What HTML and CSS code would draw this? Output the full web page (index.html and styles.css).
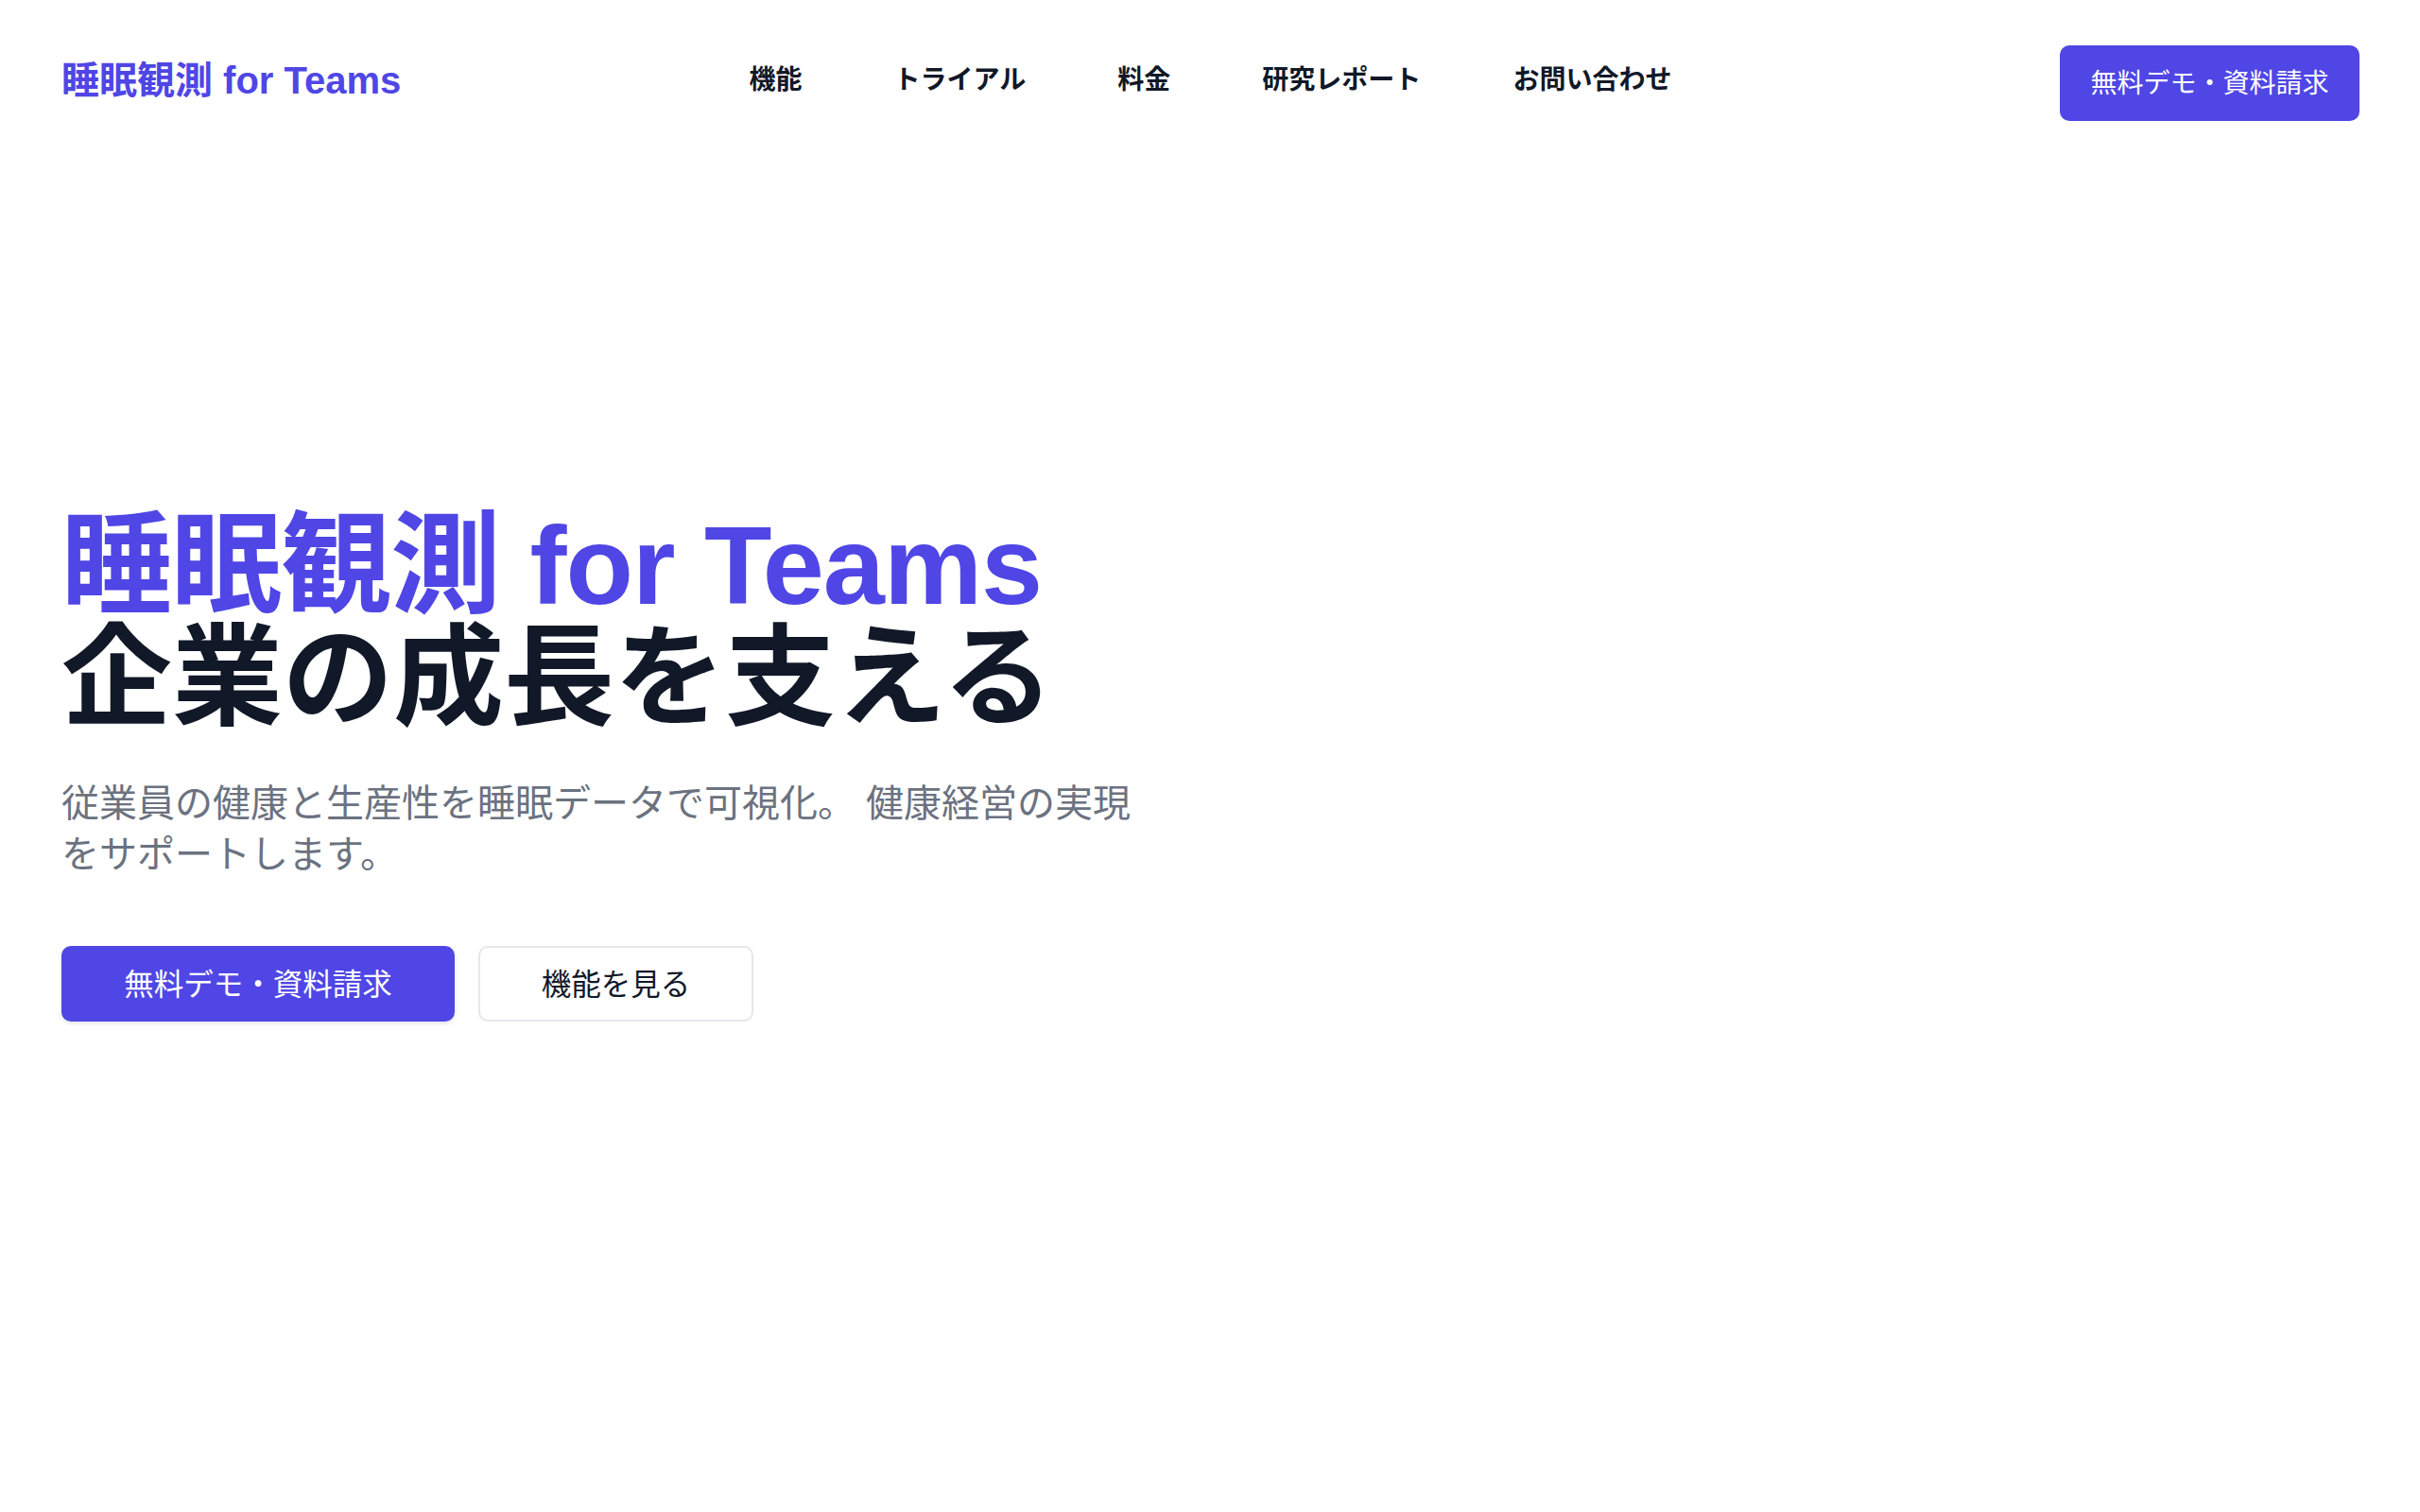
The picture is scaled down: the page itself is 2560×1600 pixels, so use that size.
FILE: index.html
```html
<!DOCTYPE html>
<html lang="ja">
<head>
<meta charset="utf-8">
<title>睡眠観測 for Teams</title>
<link rel="stylesheet" href="styles.css">
</head>
<body>
<header class="site-header">
  <a class="logo" href="#">睡眠観測 for Teams</a>
  <nav class="nav">
    <a href="#">機能</a>
    <a href="#">トライアル</a>
    <a href="#">料金</a>
    <a href="#">研究レポート</a>
    <a href="#">お問い合わせ</a>
  </nav>
  <a class="header-cta" href="#">無料デモ・資料請求</a>
</header>
<main class="hero">
  <div class="hero-inner">
    <h1 class="hero-title"><span class="accent">睡眠観測 for Teams</span><br><span class="sub">企業の成長を支える</span></h1>
    <p class="hero-lead">従業員の健康と生産性を睡眠データで可視化。 健康経営の実現をサポートします。</p>
    <div class="hero-actions">
      <a class="btn btn-primary" href="#">無料デモ・資料請求</a>
      <a class="btn btn-secondary" href="#">機能を見る</a>
    </div>
  </div>
</main>
</body>
</html>
```
FILE: styles.css
```css
* { box-sizing: border-box; }
html, body { margin: 0; padding: 0; }
body {
  font-family: "Liberation Sans", "Noto Sans CJK JP", sans-serif;
  background: #ffffff;
  color: #111827;
}
a { text-decoration: none; color: inherit; }

.site-header {
  position: absolute;
  top: 0; left: 0; right: 0;
  height: 166px;
  padding: 0 64px 0 65px;
  display: grid;
  grid-template-columns: 1fr auto 1fr;
  align-items: center;
}
.logo {
  justify-self: start;
  font-size: 40px;
  font-weight: 700;
  color: #4f46e5;
  margin-top: -3px;
}
.nav {
  display: flex;
  gap: 97px;
  font-size: 28px;
  font-weight: 700;
  color: #111827;
  margin-top: -3px;
}
.header-cta {
  justify-self: end;
  height: 80px;
  width: 317px;
  margin-top: 9px;
  display: flex;
  align-items: center;
  justify-content: center;
  background: #4f46e5;
  color: #ffffff;
  font-size: 28px;
  border-radius: 10px;
  padding-bottom: 4px;
  white-space: nowrap;
}

.hero {
  min-height: 1600px;
  display: flex;
  align-items: center;
  padding: 0 65px;
}
.hero-inner { padding-top: 20px; }
.hero-title {
  margin: 0;
  font-size: 117px;
  line-height: 119px;
  font-weight: 700;
  color: #111827;
  letter-spacing: -1px;
}
.accent { color: #4f46e5; }
.sub { letter-spacing: 0; }
.hero-lead {
  margin: 46px 0 0;
  max-width: 1150px;
  font-size: 40px;
  line-height: 54px;
  color: #6b7280;
}
.hero-actions {
  margin-top: 70px;
  display: flex;
  gap: 25px;
}
.btn {
  height: 80px;
  display: flex;
  align-items: center;
  justify-content: center;
  padding: 0 0 4px;
  font-size: 31.5px;
  border-radius: 10px;
  white-space: nowrap;
}
.btn-primary {
  background: #4f46e5;
  color: #ffffff;
  width: 416px;
  box-shadow: 0 2px 4px rgba(17, 24, 39, 0.12);
}
.btn-secondary {
  background: #ffffff;
  color: #111827;
  width: 291px;
  border: 2px solid #e5e7eb;
}
```
